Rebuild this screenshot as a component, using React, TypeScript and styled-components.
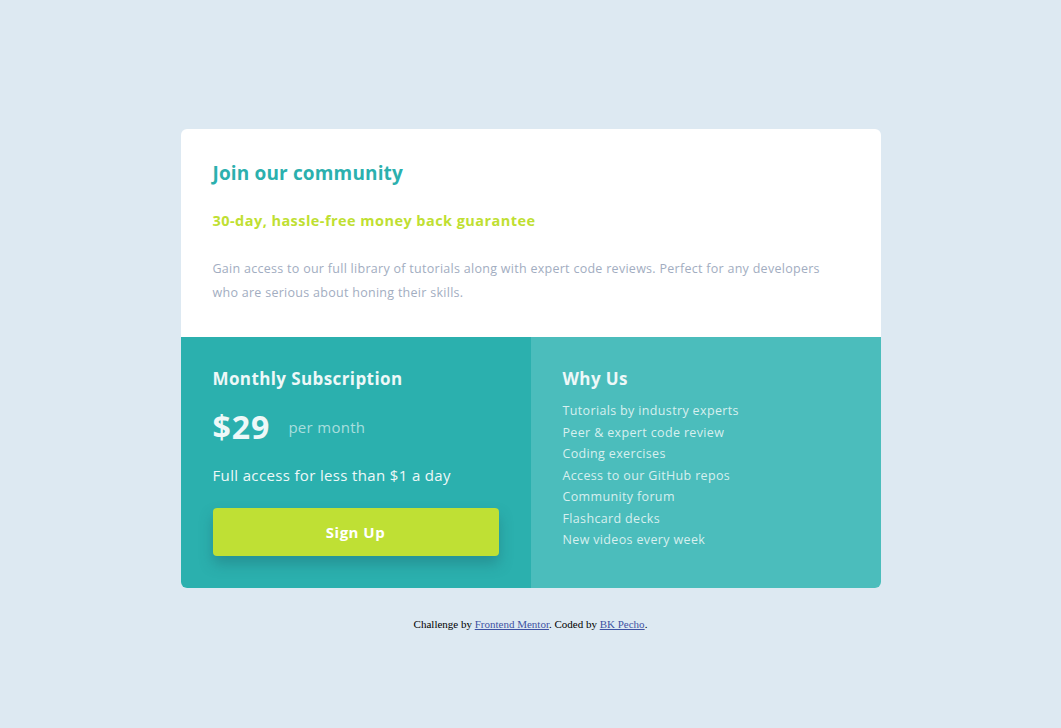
import React from "react";
import styled, { createGlobalStyle } from "styled-components";

const Global = createGlobalStyle`
  html, body { margin: 0; padding: 0; }
  body {
    background: #dde9f2;
    font-family: "Open Sans", "Liberation Sans", sans-serif;
  }
`;

const Page = styled.main`
  display: flex;
  flex-direction: column;
  align-items: center;
  padding-top: 129px;
`;

const Card = styled.section`
  width: 700px;
  border-radius: 6px;
  overflow: hidden;
  background: #fff;
`;

const Top = styled.div`
  padding: 30px 32px 32px;
`;

const Title = styled.h1`
  margin: 0 0 23px;
  font-size: 19px;
  line-height: 28px;
  font-weight: 700;
  letter-spacing: 0.15px;
  color: #2bb0ae;
`;

const Guarantee = styled.h2`
  margin: 0 0 25px;
  font-size: 14.5px;
  line-height: 22px;
  font-weight: 700;
  letter-spacing: 0.45px;
  color: #bfdf32;
`;

const Text = styled.p`
  margin: 0;
  font-size: 12.5px;
  line-height: 24px;
  letter-spacing: 0.28px;
  color: #a2adc1;
`;

const Bottom = styled.div`
  display: grid;
  grid-template-columns: 1fr 1fr;
`;

const Panel = styled.div<{ $tone: string }>`
  background: ${(p) => p.$tone};
  padding: 30px 32px 32px;
  color: #fff;
`;

const PanelTitle = styled.h3<{ $gap: number }>`
  margin: 0 0 ${(p) => p.$gap}px;
  font-size: 17px;
  line-height: 24px;
  font-weight: 700;
  letter-spacing: 0.4px;
  color: #eef8f8;
`;

const PriceRow = styled.div`
  display: flex;
  align-items: center;
  gap: 18px;
  margin-bottom: 17px;
`;

const Price = styled.span`
  font-size: 32px;
  line-height: 40px;
  font-weight: 700;
  letter-spacing: 1px;
  color: #eef8f8;
`;

const Per = styled.span`
  font-size: 15px;
  color: rgba(255, 255, 255, 0.6);
  letter-spacing: 0.3px;
`;

const Access = styled.p`
  margin: 0 0 22px;
  font-size: 15px;
  line-height: 22px;
  letter-spacing: 0.35px;
  color: #eef8f8;
`;

const Button = styled.button`
  width: 286px;
  height: 48px;
  border: none;
  border-radius: 4px;
  background: #bfe034;
  color: #fff;
  font-family: inherit;
  font-size: 15px;
  font-weight: 700;
  letter-spacing: 0.5px;
  box-shadow: 0 8px 14px rgba(30, 90, 100, 0.35);
  cursor: pointer;
`;

const List = styled.ul`
  margin: 0;
  padding: 0;
  list-style: none;
`;

const Item = styled.li`
  font-size: 12.5px;
  line-height: 21.5px;
  letter-spacing: 0.35px;
  color: rgba(255, 255, 255, 0.78);
`;

const Attribution = styled.p`
  margin: 30px 0 0;
  font-family: "Liberation Serif", serif;
  font-size: 11px;
  color: #000;
  text-align: center;
  a { color: #3e52a3; }
`;

const reasons = [
  "Tutorials by industry experts",
  "Peer & expert code review",
  "Coding exercises",
  "Access to our GitHub repos",
  "Community forum",
  "Flashcard decks",
  "New videos every week",
];

export default function App() {
  return (
    <>
      <Global />
      <Page>
        <Card>
          <Top>
            <Title>Join our community</Title>
            <Guarantee>30-day, hassle-free money back guarantee</Guarantee>
            <Text>
              Gain access to our full library of tutorials along with expert code reviews. Perfect for any developers
              who are serious about honing their skills.
            </Text>
          </Top>
          <Bottom>
            <Panel $tone="#2bb0ae">
              <PanelTitle $gap={16}>Monthly Subscription</PanelTitle>
              <PriceRow>
                <Price>$29</Price>
                <Per>per month</Per>
              </PriceRow>
              <Access>Full access for less than $1 a day</Access>
              <Button>Sign Up</Button>
            </Panel>
            <Panel $tone="#4bbdbc">
              <PanelTitle $gap={9}>Why Us</PanelTitle>
              <List>
                {reasons.map((r) => (
                  <Item key={r}>{r}</Item>
                ))}
              </List>
            </Panel>
          </Bottom>
        </Card>
        <Attribution>
          Challenge by <a href="#">Frontend Mentor</a>. Coded by <a href="#">BK Pecho</a>.
        </Attribution>
      </Page>
    </>
  );
}
